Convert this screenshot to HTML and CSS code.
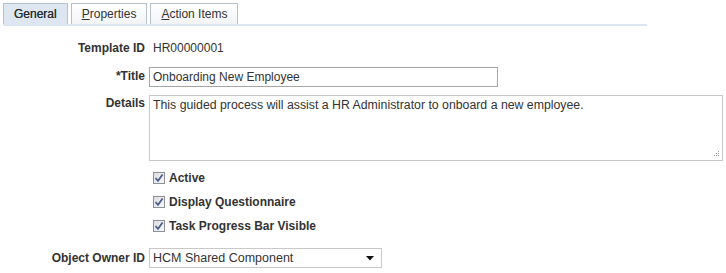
FILE: index.html
```html
<!DOCTYPE html>
<html>
<head>
  <title>Guided Process Template</title>
  <link rel="stylesheet" href="styles.css">
</head>
<body>
  <div class="tabs">
    <div class="tab active">General</div>
    <div class="tab"><u>P</u>roperties</div>
    <div class="tab"><u>A</u>ction Items</div>
  </div>

  <div class="form">
    <div class="row row-id">
      <label>Template ID</label>
      <span class="value">HR00000001</span>
    </div>
    <div class="row row-title">
      <label>*Title</label>
      <div class="input title-input">Onboarding New Employee</div>
    </div>
    <div class="row row-details">
      <label>Details</label>
      <div class="input textarea">
        This guided process will assist a HR Administrator to onboard a new employee.
        <span class="grip">
          <svg width="7" height="7" viewBox="0 0 7 7">
            <rect x="5" y="0" width="1" height="1" fill="#9a9a9a"/>
            <rect x="3" y="2" width="1" height="1" fill="#9a9a9a"/>
            <rect x="5" y="2" width="1" height="1" fill="#9a9a9a"/>
            <rect x="1" y="4" width="1" height="1" fill="#9a9a9a"/>
            <rect x="3" y="4" width="1" height="1" fill="#9a9a9a"/>
            <rect x="5" y="4" width="1" height="1" fill="#9a9a9a"/>
          </svg>
        </span>
      </div>
    </div>

    <div class="checks">
      <div class="check">
        <span class="box"><svg width="10" height="10" viewBox="0 0 10 10"><path d="M1.5 5 L4 7.8 L8.6 1.6" fill="none" stroke="#4b5a86" stroke-width="1.7"/></svg></span>
        <span>Active</span>
      </div>
      <div class="check">
        <span class="box"><svg width="10" height="10" viewBox="0 0 10 10"><path d="M1.5 5 L4 7.8 L8.6 1.6" fill="none" stroke="#4b5a86" stroke-width="1.7"/></svg></span>
        <span>Display Questionnaire</span>
      </div>
      <div class="check">
        <span class="box"><svg width="10" height="10" viewBox="0 0 10 10"><path d="M1.5 5 L4 7.8 L8.6 1.6" fill="none" stroke="#4b5a86" stroke-width="1.7"/></svg></span>
        <span>Task Progress Bar Visible</span>
      </div>
    </div>

    <div class="row row-owner">
      <label>Object Owner ID</label>
      <div class="input select">
        <span>HCM Shared Component</span>
        <svg width="8" height="5" viewBox="0 0 8 5"><path d="M0 0 H8 L4 4.5 Z" fill="#111"/></svg>
      </div>
    </div>
  </div>
</body>
</html>
```

FILE: styles.css
```css
body {
  margin: 0;
  font-family: "Liberation Sans", Arial, sans-serif;
  font-size: 12px;
  color: #333;
  background-color: #fff;
}

.tabs {
  display: flex;
  gap: 3px;
  margin: 3px 0 0 3px;
  width: 644px;
  border-bottom: 2px solid #dce6f2;
  height: 21px;
}

.tab {
  box-sizing: border-box;
  height: 21px;
  padding: 0 10px;
  border: 1px solid #b8c0cc;
  border-bottom: none;
  background: linear-gradient(#ffffff, #f1f3f6);
  font-size: 12px;
  line-height: 21px;
  color: #333;
}

.tab.active {
  background: #dde6f1;
  color: #2b2f36;
  text-shadow: 0 0 0.4px #2b2f36;
}

.form {
  padding-top: 12px;
}

.row {
  display: grid;
  grid-template-columns: 145px auto;
  column-gap: 4px;
  align-items: start;
}

.row label {
  font-weight: bold;
  text-align: right;
  color: #333;
}

.row-id {
  line-height: 20px;
}

.row-id .value {
  padding-left: 4px;
}

.input {
  box-sizing: border-box;
  border: 1px solid #a6a6a6;
  background: #fff;
  color: #333;
  padding: 0 3px;
}

.row-title {
  margin-top: 9px;
  line-height: 19px;
}

.title-input {
  width: 349px;
  height: 20px;
  line-height: 18px;
  font-size: 12px;
}

.row-details {
  margin-top: 8px;
}

.row-details label {
  line-height: 16px;
}

.textarea {
  position: relative;
  width: 574px;
  height: 66px;
  border-color: #c8c8c8;
  padding-top: 1px;
  line-height: 16px;
  font-size: 12.3px;
}

.grip {
  position: absolute;
  right: 2px;
  bottom: 2px;
  line-height: 0;
}

.checks {
  margin: 5px 0 0 153px;
}

.check {
  display: flex;
  align-items: center;
  gap: 4px;
  height: 24px;
  font-weight: bold;
}

.box {
  box-sizing: border-box;
  width: 12px;
  height: 12px;
  border: 1px solid #8e8f94;
  background: linear-gradient(135deg, #dcdde2, #f8f8fa);
  display: flex;
  align-items: center;
  justify-content: center;
}

.row-owner {
  margin-top: 10px;
  line-height: 19px;
}

.row-owner label {
  line-height: 20px;
}

.select {
  width: 233px;
  height: 20px;
  display: flex;
  align-items: center;
  justify-content: space-between;
  border-color: #c8c8c8;
  padding-right: 7px;
  font-size: 12.5px;
}
```
